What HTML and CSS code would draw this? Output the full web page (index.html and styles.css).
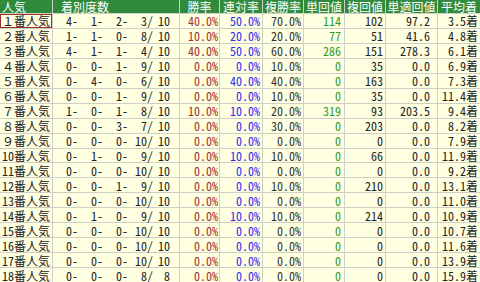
FILE: index.html
```html
<!DOCTYPE html>
<html lang="ja">
<head>
<meta charset="utf-8">
<title>人気別成績</title>
<link rel="stylesheet" href="styles.css">
</head>
<body>
<div class="tbl">
  <div class="h h-pop">人気</div>
  <div class="h h-rec">着別度数</div>
  <div class="h">勝率</div>
  <div class="h">連対率</div>
  <div class="h">複勝率</div>
  <div class="h">単回値</div>
  <div class="h">複回値</div>
  <div class="h">単適回値</div>
  <div class="h">平均着</div>

  <div class="c pop sel">１番人気</div><div class="c rec"><span>4-</span><span>1-</span><span>2-</span><span>3/</span><span>10</span></div><div class="c win">40.0%</div><div class="c ren">50.0%</div><div class="c fuku">70.0%</div><div class="c tan">114</div><div class="c fk">102</div><div class="c tt">97.2</div><div class="c avg">3.5着</div>
  <div class="c pop">２番人気</div><div class="c rec"><span>1-</span><span>1-</span><span>0-</span><span>8/</span><span>10</span></div><div class="c win">10.0%</div><div class="c ren">20.0%</div><div class="c fuku">20.0%</div><div class="c tan">77</div><div class="c fk">51</div><div class="c tt">41.6</div><div class="c avg">4.8着</div>
  <div class="c pop">３番人気</div><div class="c rec"><span>4-</span><span>1-</span><span>1-</span><span>4/</span><span>10</span></div><div class="c win">40.0%</div><div class="c ren">50.0%</div><div class="c fuku">60.0%</div><div class="c tan">286</div><div class="c fk">151</div><div class="c tt">278.3</div><div class="c avg">6.1着</div>
  <div class="c pop">４番人気</div><div class="c rec"><span>0-</span><span>0-</span><span>1-</span><span>9/</span><span>10</span></div><div class="c win">0.0%</div><div class="c ren">0.0%</div><div class="c fuku">10.0%</div><div class="c tan">0</div><div class="c fk">35</div><div class="c tt">0.0</div><div class="c avg">6.9着</div>
  <div class="c pop">５番人気</div><div class="c rec"><span>0-</span><span>4-</span><span>0-</span><span>6/</span><span>10</span></div><div class="c win">0.0%</div><div class="c ren">40.0%</div><div class="c fuku">40.0%</div><div class="c tan">0</div><div class="c fk">163</div><div class="c tt">0.0</div><div class="c avg">7.3着</div>
  <div class="c pop">６番人気</div><div class="c rec"><span>0-</span><span>0-</span><span>1-</span><span>9/</span><span>10</span></div><div class="c win">0.0%</div><div class="c ren">0.0%</div><div class="c fuku">10.0%</div><div class="c tan">0</div><div class="c fk">35</div><div class="c tt">0.0</div><div class="c avg">11.4着</div>
  <div class="c pop">７番人気</div><div class="c rec"><span>1-</span><span>0-</span><span>1-</span><span>8/</span><span>10</span></div><div class="c win">10.0%</div><div class="c ren">10.0%</div><div class="c fuku">20.0%</div><div class="c tan">319</div><div class="c fk">93</div><div class="c tt">203.5</div><div class="c avg">9.4着</div>
  <div class="c pop">８番人気</div><div class="c rec"><span>0-</span><span>0-</span><span>3-</span><span>7/</span><span>10</span></div><div class="c win">0.0%</div><div class="c ren">0.0%</div><div class="c fuku">30.0%</div><div class="c tan">0</div><div class="c fk">203</div><div class="c tt">0.0</div><div class="c avg">8.2着</div>
  <div class="c pop">９番人気</div><div class="c rec"><span>0-</span><span>0-</span><span>0-</span><span>10/</span><span>10</span></div><div class="c win">0.0%</div><div class="c ren">0.0%</div><div class="c fuku">0.0%</div><div class="c tan">0</div><div class="c fk">0</div><div class="c tt">0.0</div><div class="c avg">7.9着</div>
  <div class="c pop">10番人気</div><div class="c rec"><span>0-</span><span>1-</span><span>0-</span><span>9/</span><span>10</span></div><div class="c win">0.0%</div><div class="c ren">10.0%</div><div class="c fuku">10.0%</div><div class="c tan">0</div><div class="c fk">66</div><div class="c tt">0.0</div><div class="c avg">11.9着</div>
  <div class="c pop">11番人気</div><div class="c rec"><span>0-</span><span>0-</span><span>0-</span><span>10/</span><span>10</span></div><div class="c win">0.0%</div><div class="c ren">0.0%</div><div class="c fuku">0.0%</div><div class="c tan">0</div><div class="c fk">0</div><div class="c tt">0.0</div><div class="c avg">9.2着</div>
  <div class="c pop">12番人気</div><div class="c rec"><span>0-</span><span>0-</span><span>1-</span><span>9/</span><span>10</span></div><div class="c win">0.0%</div><div class="c ren">0.0%</div><div class="c fuku">10.0%</div><div class="c tan">0</div><div class="c fk">210</div><div class="c tt">0.0</div><div class="c avg">13.1着</div>
  <div class="c pop">13番人気</div><div class="c rec"><span>0-</span><span>0-</span><span>0-</span><span>10/</span><span>10</span></div><div class="c win">0.0%</div><div class="c ren">0.0%</div><div class="c fuku">0.0%</div><div class="c tan">0</div><div class="c fk">0</div><div class="c tt">0.0</div><div class="c avg">11.0着</div>
  <div class="c pop">14番人気</div><div class="c rec"><span>0-</span><span>1-</span><span>0-</span><span>9/</span><span>10</span></div><div class="c win">0.0%</div><div class="c ren">10.0%</div><div class="c fuku">10.0%</div><div class="c tan">0</div><div class="c fk">214</div><div class="c tt">0.0</div><div class="c avg">10.9着</div>
  <div class="c pop">15番人気</div><div class="c rec"><span>0-</span><span>0-</span><span>0-</span><span>10/</span><span>10</span></div><div class="c win">0.0%</div><div class="c ren">0.0%</div><div class="c fuku">0.0%</div><div class="c tan">0</div><div class="c fk">0</div><div class="c tt">0.0</div><div class="c avg">10.7着</div>
  <div class="c pop">16番人気</div><div class="c rec"><span>0-</span><span>0-</span><span>0-</span><span>10/</span><span>10</span></div><div class="c win">0.0%</div><div class="c ren">0.0%</div><div class="c fuku">0.0%</div><div class="c tan">0</div><div class="c fk">0</div><div class="c tt">0.0</div><div class="c avg">11.6着</div>
  <div class="c pop">17番人気</div><div class="c rec"><span>0-</span><span>0-</span><span>0-</span><span>10/</span><span>10</span></div><div class="c win">0.0%</div><div class="c ren">0.0%</div><div class="c fuku">0.0%</div><div class="c tan">0</div><div class="c fk">0</div><div class="c tt">0.0</div><div class="c avg">13.9着</div>
  <div class="c pop">18番人気</div><div class="c rec"><span>0-</span><span>0-</span><span>0-</span><span>8/</span><span>8</span></div><div class="c win">0.0%</div><div class="c ren">0.0%</div><div class="c fuku">0.0%</div><div class="c tan">0</div><div class="c fk">0</div><div class="c tt">0.0</div><div class="c avg">15.9着</div>
</div>
</body>
</html>
```

FILE: styles.css
```css
html, body {
  margin: 0;
  padding: 0;
  background: #ffffff;
}

.tbl {
  display: grid;
  grid-template-columns: 52px 126px 39px 42px 40px 40px 40px 51px 42px;
  grid-template-rows: 13px repeat(18, 1fr);
  gap: 1px;
  width: 480px;
  height: 282px;
  background: #cfcfc8;
  font-family: "Noto Sans Mono CJK JP", "Noto Sans CJK JP", "DejaVu Sans Mono", monospace;
  font-size: 12px;
  line-height: 13px;
  color: #222222;
}

.h {
  background: #2f8a3c;
  color: #ffffff;
  display: flex;
  align-items: center;
  justify-content: center;
  white-space: nowrap;
}

.h-pop {
  justify-content: flex-start;
  padding-left: 2px;
}

.h-rec {
  justify-content: flex-start;
  padding-left: 8px;
}

.c {
  background: #ffffe2;
  display: flex;
  align-items: center;
  justify-content: flex-end;
  white-space: nowrap;
}

.pop {
  justify-content: flex-start;
  padding-left: 2px;
}

.sel {
  box-shadow: inset 0 0 0 1px #9c2f2f;
}

.rec {
  padding-right: 9px;
}

.rec span {
  display: block;
  width: 25px;
  text-align: right;
}

.rec span:last-child {
  width: 17px;
}

.win {
  color: #a12f2f;
  padding-right: 1px;
}

.ren {
  color: #2b2bf0;
  padding-right: 2px;
}

.fuku {
  color: #333333;
  padding-right: 2px;
}

.tan {
  color: #2f9a2f;
  padding-right: 3px;
}

.fk {
  padding-right: 2px;
}

.tt {
  padding-right: 7px;
}

.avg {
  padding-right: 2px;
}
```
